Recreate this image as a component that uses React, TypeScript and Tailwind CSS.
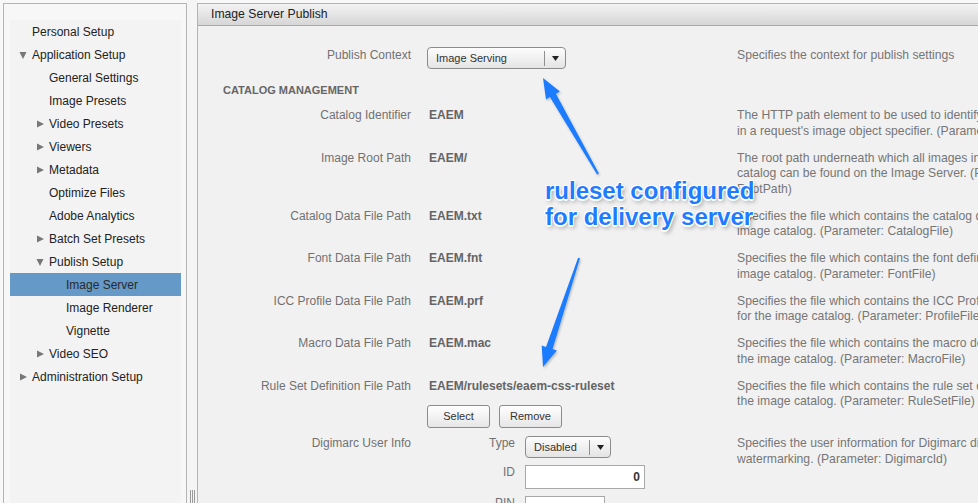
import React from "react";

type TreeItem = {
  label: string;
  depth: 0 | 1 | 2;
  caret?: "down" | "right";
  selected?: boolean;
};

const tree: TreeItem[] = [
  { label: "Personal Setup", depth: 0 },
  { label: "Application Setup", depth: 0, caret: "down" },
  { label: "General Settings", depth: 1 },
  { label: "Image Presets", depth: 1 },
  { label: "Video Presets", depth: 1, caret: "right" },
  { label: "Viewers", depth: 1, caret: "right" },
  { label: "Metadata", depth: 1, caret: "right" },
  { label: "Optimize Files", depth: 1 },
  { label: "Adobe Analytics", depth: 1 },
  { label: "Batch Set Presets", depth: 1, caret: "right" },
  { label: "Publish Setup", depth: 1, caret: "down" },
  { label: "Image Server", depth: 2, selected: true },
  { label: "Image Renderer", depth: 2 },
  { label: "Vignette", depth: 2 },
  { label: "Video SEO", depth: 1, caret: "right" },
  { label: "Administration Setup", depth: 0, caret: "right" },
];

const indent = ["pl-[9px]", "pl-[26px]", "pl-[43px]"];

const fileRows = [
  {
    label: "Catalog Identifier",
    value: "EAEM",
    desc: [
      "The HTTP path element to be used to identify the catalog",
      "in a request's image object specifier. (Parameter: CatalogId)",
    ],
  },
  {
    label: "Image Root Path",
    value: "EAEM/",
    desc: [
      "The root path underneath which all images in the",
      "catalog can be found on the Image Server. (Parameter:",
      "RootPath)",
    ],
  },
  {
    label: "Catalog Data File Path",
    value: "EAEM.txt",
    desc: [
      "Specifies the file which contains the catalog data for the",
      "image catalog. (Parameter: CatalogFile)",
    ],
  },
  {
    label: "Font Data File Path",
    value: "EAEM.fnt",
    desc: [
      "Specifies the file which contains the font definitions for the",
      "image catalog. (Parameter: FontFile)",
    ],
  },
  {
    label: "ICC Profile Data File Path",
    value: "EAEM.prf",
    desc: [
      "Specifies the file which contains the ICC Profile definitions",
      "for the image catalog. (Parameter: ProfileFile)",
    ],
  },
  {
    label: "Macro Data File Path",
    value: "EAEM.mac",
    desc: [
      "Specifies the file which contains the macro definitions for",
      "the image catalog. (Parameter: MacroFile)",
    ],
  },
];

function Caret({ dir }: { dir: "down" | "right" }) {
  return (
    <svg width="8" height="8" viewBox="0 0 8 8" className="shrink-0">
      {dir === "down" ? (
        <polygon points="0.5,1 7.5,1 4,8" fill="#777" />
      ) : (
        <polygon points="1,0.5 8,4 1,7.5" fill="#777" />
      )}
    </svg>
  );
}

function Select({ text, width }: { text: string; width: string }) {
  return (
    <div
      className={`${width} h-[22px] flex items-center rounded-[4px] border border-[#8c8c8c] bg-linear-to-b from-[#fdfdfd] to-[#e4e4e4] text-[11px] text-[#333]`}
    >
      <span className="flex-1 pl-[8px]">{text}</span>
      <span className="w-px h-[15px] bg-[#8f8f8f]" />
      <span className="w-[20px] flex justify-center">
        <svg width="7" height="5" viewBox="0 0 7 5">
          <polygon points="0,0 7,0 3.5,5" fill="#222" />
        </svg>
      </span>
    </div>
  );
}

function Button({ children }: { children: React.ReactNode }) {
  return (
    <div className="w-[63px] h-[23px] flex items-center justify-center rounded-[3px] border border-[#8c8c8c] bg-linear-to-b from-[#ffffff] to-[#e6e6e6] text-[11px] text-[#333]">
      {children}
    </div>
  );
}

function Desc({ lines }: { lines: string[] }) {
  return (
    <div className="text-[12.2px] leading-[15.5px] text-[#767676] whitespace-nowrap">
      {lines.map((l) => (
        <div key={l}>{l}</div>
      ))}
    </div>
  );
}

function Label({ children }: { children: React.ReactNode }) {
  return (
    <div className="w-[213px] shrink-0 text-right text-[12px] leading-[15.5px] text-[#717171]">
      {children}
    </div>
  );
}

function SubLabel({ children }: { children: React.ReactNode }) {
  return (
    <div className="w-[114px] shrink-0 pr-[10px] text-right text-[12px] leading-[15.5px] text-[#717171]">
      {children}
    </div>
  );
}

export default function App() {
  return (
    <div className="relative w-[978px] h-[503px] overflow-hidden flex bg-[#f8f8f8] font-['Liberation_Sans',Arial,sans-serif]">
      {/* left nav */}
      <div className="mt-[3px] ml-[3px] w-[184px] h-[600px] shrink-0 border border-[#b4b4b4] bg-[#f7f7f7] pt-[16px] pl-[6px] pr-[5px] flex flex-col">
        <div className="flex-1 bg-[#f3f3f3]">
          {tree.map((item) => (
            <div
              key={item.label}
              className={`h-[23px] flex items-center text-[12px] ${indent[item.depth]} ${
                item.selected ? "bg-[#6599c7] text-[#2a2a2a]" : "text-[#222]"
              }`}
            >
              <span className="w-[13px] shrink-0 flex">
                {item.caret && <Caret dir={item.caret} />}
              </span>
              <span>{item.label}</span>
            </div>
          ))}
        </div>
      </div>

      {/* splitter */}
      <div className="w-[10px] shrink-0 bg-[#f5f5f5] flex flex-col justify-end">
        <div className="flex gap-[1px] pl-[3px]">
          <span className="w-px h-[13px] bg-[#999]" />
          <span className="w-px h-[13px] bg-[#999]" />
          <span className="w-px h-[13px] bg-[#999]" />
        </div>
      </div>

      {/* main panel */}
      <div className="mt-[3px] flex-1 border-l border-t border-[#b4b4b4] bg-[#f1f1f1] overflow-hidden">
        <div className="h-[22px] border-b border-[#a9a9a9] bg-linear-to-b from-[#f3f3f3] to-[#d6d6d6] pl-[13px] text-[12.2px] leading-[21px] text-[#222]">
          Image Server Publish
        </div>

        <div className="pt-[21px]">
          <div className="flex items-start h-[22px] mb-[14px]">
            <div className="pt-[1px] flex">
              <Label>Publish Context</Label>
            </div>
            <div className="w-[326px] shrink-0 pl-[16px]">
              <Select text="Image Serving" width="w-[139px]" />
            </div>
            <div className="pt-[1px]">
              <Desc lines={["Specifies the context for publish settings"]} />
            </div>
          </div>

          <div className="pl-[25px] text-[11px] leading-[15.5px] font-bold text-[#666] mb-[9.5px]">
            CATALOG MANAGEMENT
          </div>

          {fileRows.map((r) => (
            <div key={r.label} className="flex items-start mb-[11.5px]">
              <Label>{r.label}</Label>
              <div className="w-[326px] shrink-0 pl-[18px] text-[12px] leading-[15.5px] font-bold text-[#646464]">
                {r.value}
              </div>
              <Desc lines={r.desc} />
            </div>
          ))}

          <div className="flex items-start mb-[8px]">
            <Label>Rule Set Definition File Path</Label>
            <div className="w-[326px] shrink-0 pl-[18px]">
              <div className="text-[12px] leading-[15.5px] font-bold text-[#646464]">
                EAEM/rulesets/eaem-css-ruleset
              </div>
              <div className="mt-[11px] -ml-[2px] flex gap-[9px]">
                <Button>Select</Button>
                <Button>Remove</Button>
              </div>
            </div>
            <Desc
              lines={[
                "Specifies the file which contains the rule set definitions for",
                "the image catalog. (Parameter: RuleSetFile)",
              ]}
            />
          </div>

          <div className="flex items-start">
            <Label>Digimarc User Info</Label>
            <div className="w-[326px] shrink-0 flex flex-col gap-[7px]">
              <div className="flex items-start">
                <SubLabel>Type</SubLabel>
                <Select text="Disabled" width="w-[86px]" />
              </div>
              <div className="flex items-start">
                <SubLabel>ID</SubLabel>
                <div className="w-[120px] h-[24px] border border-[#a8a8a8] bg-white flex items-center justify-end pr-[4px] text-[12px] font-bold text-[#333]">
                  0
                </div>
              </div>
              <div className="flex items-start">
                <SubLabel>PIN</SubLabel>
                <div className="w-[80px] h-[24px] border border-[#a8a8a8] bg-white flex items-center justify-end pr-[4px] text-[12px] font-bold text-[#333]">
                  0
                </div>
              </div>
            </div>
            <Desc
              lines={[
                "Specifies the user information for Digimarc digital",
                "watermarking. (Parameter: DigimarcId)",
              ]}
            />
          </div>
        </div>
      </div>

      {/* annotation overlay */}
      <svg
        className="absolute inset-0 pointer-events-none"
        width="978"
        height="503"
        viewBox="0 0 978 503"
      >
        <defs>
          <filter id="sh" x="-20%" y="-20%" width="140%" height="140%">
            <feDropShadow dx="1" dy="1.5" stdDeviation="1.2" floodColor="#000" floodOpacity="0.25" />
          </filter>
        </defs>
        <polygon
          points="543,78 559.9,91.4 555.9,93.7 598.9,173.5 597.1,174.5 549.9,97.1 546,99.4"
          fill="#1f7cff"
          filter="url(#sh)"
        />
        <polygon
          points="543,367 556.9,350.5 552.6,349.1 580,258.3 578.1,257.7 546,346.9 541.7,345.5"
          fill="#1f7cff"
          filter="url(#sh)"
        />
      </svg>
      <div className="absolute left-[545px] top-[178px] text-[24px] leading-[26px] font-bold text-[#1f7cff] whitespace-nowrap [text-shadow:1px_1px_0_#fff,-1px_-1px_0_#fff,1px_-1px_0_#fff,-1px_1px_0_#fff,0_2px_0_#fff,2px_3px_4px_rgba(0,0,0,0.35)]">
        <div>ruleset configured</div>
        <div>for delivery server</div>
      </div>
    </div>
  );
}
